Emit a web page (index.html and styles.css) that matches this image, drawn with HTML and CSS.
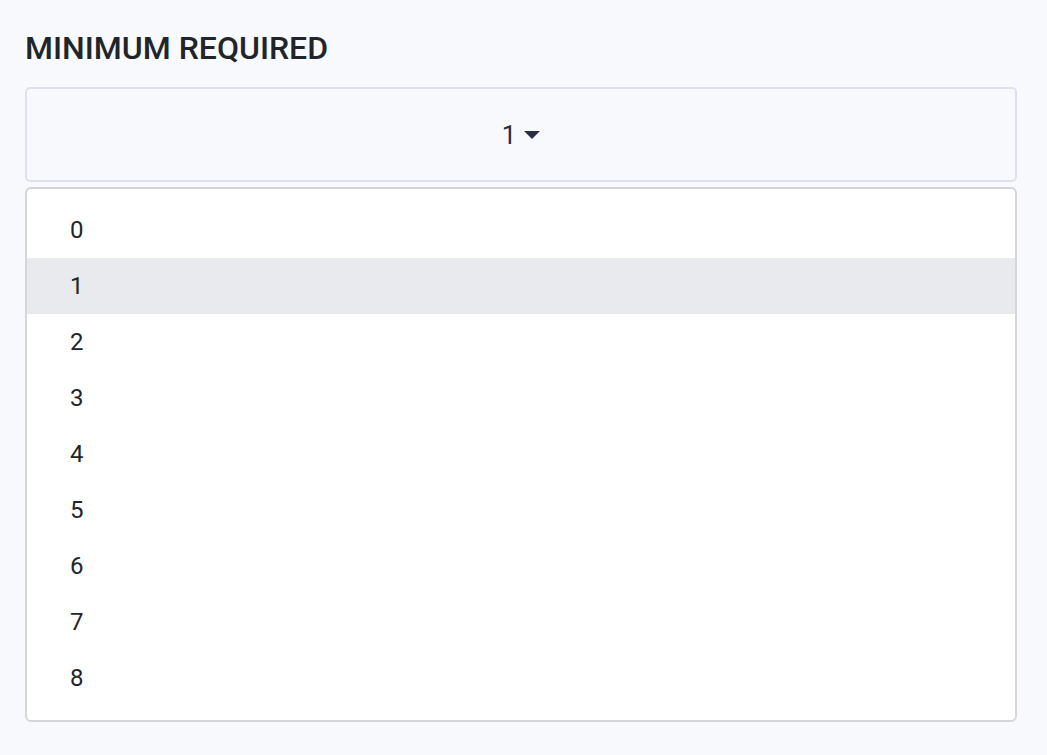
FILE: index.html
```html
<!DOCTYPE html>
<html lang="en">

<head>
  <meta charset="UTF-8">
  <meta name="viewport" content="width=device-width, initial-scale=1.0">
  <title>Minimum Required</title>
  <link rel="stylesheet" href="styles.css">
</head>

<body>
  <div class="field">
    <h2 class="field-label">MINIMUM REQUIRED</h2>
    <button class="select-toggle" type="button">
      <span class="select-value">1</span>
      <span class="caret"></span>
    </button>
    <ul class="select-menu">
      <li class="select-item">0</li>
      <li class="select-item active">1</li>
      <li class="select-item">2</li>
      <li class="select-item">3</li>
      <li class="select-item">4</li>
      <li class="select-item">5</li>
      <li class="select-item">6</li>
      <li class="select-item">7</li>
      <li class="select-item">8</li>
    </ul>
  </div>
</body>
</html>
```

FILE: styles.css
```css
body {
  margin: 0;
  background-color: #f8f9fc;
  font-family: Roboto, "Liberation Sans", Arial, sans-serif;
  color: #212529;
}

.field {
  padding: 30px 30px 0 25px;
}

.field-label {
  margin: 0 0 21px;
  font-size: 32px;
  font-weight: 500;
  line-height: 36px;
  color: #212529;
}

.select-toggle {
  display: flex;
  justify-content: center;
  align-items: center;
  width: 100%;
  height: 95px;
  padding: 0;
  background-color: #f8f9fc;
  border: 2px solid #dde0f0;
  border-radius: 5px;
  font-family: inherit;
  font-size: 26px;
  color: #2a2e45;
  cursor: pointer;
}

.caret {
  width: 0;
  height: 0;
  margin-left: 8px;
  border-left: 8px solid transparent;
  border-right: 8px solid transparent;
  border-top: 8px solid #2a2e45;
}

.select-menu {
  list-style: none;
  margin: 5px 0 0;
  padding: 13px 0 14px;
  background-color: #fff;
  border: 2px solid #d6d6da;
  border-radius: 6px;
}

.select-item {
  height: 56px;
  line-height: 56px;
  padding-left: 43px;
  font-size: 24px;
  color: #212529;
}

.select-item.active {
  background-color: #e9eaed;
}
```
